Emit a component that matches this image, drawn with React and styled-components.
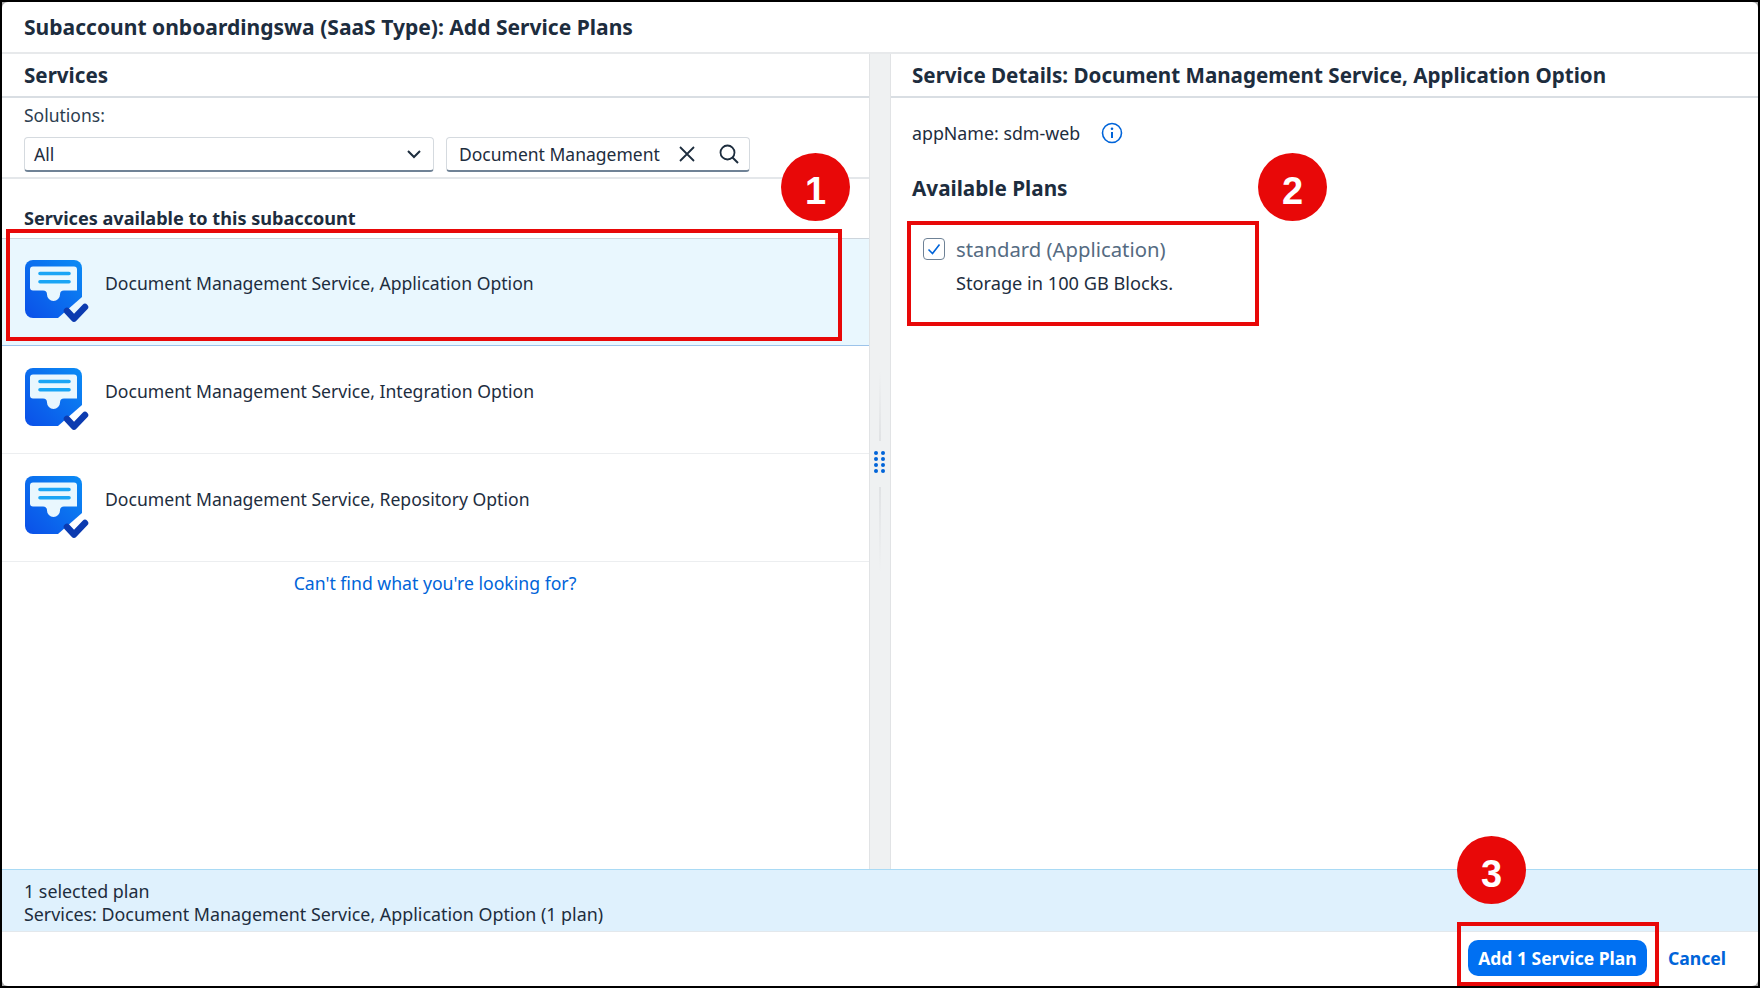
import React from "react";
import styled, { createGlobalStyle } from "styled-components";

const Global = createGlobalStyle`
  html, body { margin: 0; padding: 0; background: #fff; }
  body { font-family: "Noto Sans", "Open Sans", sans-serif; color: #1d2d3e; }
  * { box-sizing: border-box; }
`;

const Frame = styled.div`
  position: relative;
  width: 1760px;
  height: 988px;
  border: 2px solid #000;
  background: #a9a9a9;
  overflow: hidden;
`;
const Dialog = styled.div`
  width: 100%;
  height: 100%;
  display: flex;
  flex-direction: column;
  background: #fff;
  border-radius: 6px;
  overflow: hidden;
`;
const TitleBar = styled.header`
  height: 52px;
  flex: none;
  display: flex;
  align-items: center;
  padding: 0 22px 1px;
  border-bottom: 2px solid #e7e9eb;
  font-size: 21.05px;
  font-weight: 700;
  white-space: nowrap;
`;
const Main = styled.main`
  flex: 1;
  min-height: 0;
  display: flex;
`;
const LeftPane = styled.section`
  width: 867px;
  flex: none;
  display: flex;
  flex-direction: column;
`;
const RightPane = styled.section`
  flex: 1;
  display: flex;
  flex-direction: column;
`;
const PaneHeader = styled.h2`
  margin: 0;
  height: 44px;
  flex: none;
  display: flex;
  align-items: center;
  padding: 0 ${(p) => p.$pad}px 0;
  border-bottom: 2px solid #d9dee3;
  font-size: 20.6px;
  font-weight: 700;
  white-space: nowrap;
`;
const Splitter = styled.div`
  width: 22px;
  flex: none;
  background: #eff1f2;
  border-left: 1px solid #e1e3e5;
  border-right: 1px solid #e1e3e5;
  display: flex;
  flex-direction: column;
  align-items: center;
  padding-top: 317px;
`;
const GripLine = styled.div`
  width: 2px;
  height: ${(p) => p.$h}px;
  background: linear-gradient(${(p) => p.$dir}, #e0e2e4, #eff1f2);
`;
const Grip = styled.svg`
  width: 14px;
  height: 26px;
  margin: 8px 0 12px;
  flex: none;
`;
const FilterArea = styled.div`
  padding: 5px 0 0 12px;
  border-bottom: 2px solid #e4e7ea;
  height: 81px;
  flex: none;
`;
const SolutionsLabel = styled.div`
  font-size: 17.5px;
  line-height: 24px;
  padding-left: 10px;
  color: #2c3d4f;
`;
const Filters = styled.div`
  display: flex;
  gap: 12px;
  margin: 10px 0 0 10px;
`;
const Field = styled.div`
  width: ${(p) => p.$w}px;
  height: 35px;
  display: flex;
  align-items: center;
  background: #fff;
  border: 1px solid #d5dadf;
  border-bottom: 2px solid #6f8296;
  border-radius: 4px;
  font-size: 17.5px;
  padding: 0 ${(p) => p.$right}px 0 ${(p) => p.$left}px;
`;
const FieldText = styled.span`
  flex: 1;
  white-space: nowrap;
`;
const SectionTitle = styled.h3`
  margin: 0;
  height: 59px;
  flex: none;
  display: flex;
  align-items: flex-end;
  padding: 0 0 8px 22px;
  font-size: 18.1px;
  font-weight: 700;
  white-space: nowrap;
`;
const ServiceRow = styled.div`
  height: 108px;
  flex: none;
  display: flex;
  align-items: flex-start;
  padding: ${(p) => (p.$selected ? 21 : 22)}px 0 0 23px;
  gap: 15px;
  background: ${(p) => (p.$selected ? "#e9f7fe" : "#fff")};
  border-top: ${(p) => (p.$selected ? "1px solid #cdd5dc" : "none")};
  border-bottom: 1px solid ${(p) => (p.$selected ? "#9cc3ea" : "#eceef0")};
`;
const ServiceIcon = styled.svg`
  width: 65px;
  height: 65px;
  flex: none;
`;
const ServiceName = styled.span`
  font-size: 17.6px;
  line-height: 24px;
  padding-top: 11px;
  white-space: nowrap;
`;
const LinkLine = styled.a`
  display: block;
  text-align: center;
  font-size: 17.65px;
  line-height: 24px;
  margin-top: 9px;
  padding-right: 1px;
  color: #0064d9;
`;
const DetailBody = styled.div`
  padding: 23px 21px 0;
`;
const AppName = styled.div`
  display: flex;
  align-items: center;
  gap: 21px;
  font-size: 17.8px;
  line-height: 24px;
`;
const PlansTitle = styled.h3`
  margin: 29px 0 0;
  font-size: 20.7px;
  line-height: 28px;
  font-weight: 700;
`;
const PlanLine = styled.div`
  display: flex;
  align-items: center;
  gap: 11px;
  margin: 33px 0 0 11px;
  font-size: 20.3px;
  line-height: 28px;
  color: #556b82;
`;
const Checkbox = styled.span`
  width: 22px;
  height: 22px;
  display: flex;
  align-items: center;
  justify-content: center;
  background: #fff;
  border: 1px solid #6f8296;
  border-radius: 4px;
`;
const PlanDesc = styled.div`
  margin: 8px 0 0 44px;
  font-size: 18.2px;
  line-height: 24px;
`;
const InfoBand = styled.div`
  height: 63px;
  flex: none;
  background: #dff1fd;
  border-top: 1px solid #a9daf5;
  border-bottom: 1px solid #e3e8ec;
  padding: 10px 22px 0;
  font-size: 17.85px;
  line-height: 22.5px;
`;
const Footer = styled.footer`
  height: 54px;
  flex: none;
  display: flex;
  align-items: center;
  justify-content: flex-end;
  gap: 21px;
  padding: 0 32px 3px 0;
`;
const PrimaryButton = styled.button`
  width: 179px;
  height: 36px;
  border: none;
  border-radius: 10px;
  background: #0070f2;
  color: #fff;
  font: 700 17.5px "Noto Sans", sans-serif;
  padding: 0;
`;
const TextButton = styled.span`
  color: #0064d9;
  font-size: 17.6px;
  font-weight: 700;
`;
const Highlight = styled.div`
  position: absolute;
  left: ${(p) => p.$x}px;
  top: ${(p) => p.$y}px;
  width: ${(p) => p.$w}px;
  height: ${(p) => p.$h}px;
  border: 4px solid #e80808;
`;
const Badge = styled.div`
  position: absolute;
  left: ${(p) => p.$x}px;
  top: ${(p) => p.$y}px;
  width: 69px;
  height: 68px;
  border-radius: 50%;
  background: #e80808;
  color: #fff;
  font: 700 38px/77px "Liberation Sans", sans-serif;
  text-align: center;
`;

const DocIcon = () => (
  <ServiceIcon viewBox="0 0 65 65">
    <defs>
      <linearGradient id="docg" x1="0" y1="1" x2="1" y2="0">
        <stop offset="0" stopColor="#0b4fe8" />
        <stop offset="1" stopColor="#0b8cf5" />
      </linearGradient>
    </defs>
    <path d="M8 0H49a8 8 0 0 1 8 8V37L33 58H8a8 8 0 0 1-8-8V8a8 8 0 0 1 8-8z" fill="url(#docg)" />
    <path d="M8 6.500H49a3 3 0 0 1 3 3V30.500H39a4 4 0 0 0-4 4a6.500 6.500 0 0 1-13 0a4 4 0 0 0-4-4H8a3 3 0 0 1-3-3V9.500a3 3 0 0 1 3-3z" fill="#e9f7fe" />
    <path d="M15 13.500H44M15 21.800H44" stroke="#1aa5f5" strokeWidth="3.600" strokeLinecap="round" />
    <path d="M42 51L49 58.500L60 47" fill="none" stroke="#0c3bb0" strokeWidth="6.500" strokeLinecap="round" strokeLinejoin="round" />
  </ServiceIcon>
);

const services = [
  { name: "Document Management Service, Application Option", selected: true },
  { name: "Document Management Service, Integration Option" },
  { name: "Document Management Service, Repository Option" },
];

export default function App() {
  return (
    <Frame>
      <Global />
      <Dialog>
        <TitleBar>Subaccount onboardingswa (SaaS Type): Add Service Plans</TitleBar>
        <Main>
          <LeftPane>
            <PaneHeader $pad={22}>Services</PaneHeader>
            <FilterArea>
              <SolutionsLabel>Solutions:</SolutionsLabel>
              <Filters>
                <Field $w={410} $left={9} $right={11}>
                  <FieldText>All</FieldText>
                  <svg width="16" height="16" viewBox="0 0 16 16">
                    <path d="M2 5L8 11L14 5" fill="none" stroke="#1d2d3e" strokeWidth="2" />
                  </svg>
                </Field>
                <Field $w={304} $left={12} $right={9}>
                  <FieldText>Document Management</FieldText>
                  <svg width="18" height="18" viewBox="0 0 18 18">
                    <path d="M2 2L16 16M16 2L2 16" stroke="#1d2d3e" strokeWidth="1.800" />
                  </svg>
                  <svg width="22" height="22" viewBox="0 0 22 22" style={{ marginLeft: 22 }}>
                    <circle cx="9.500" cy="9.500" r="7" fill="none" stroke="#1d2d3e" strokeWidth="1.800" />
                    <path d="M14.500 14.500L20 20" stroke="#1d2d3e" strokeWidth="2" />
                  </svg>
                </Field>
              </Filters>
            </FilterArea>
            <SectionTitle>Services available to this subaccount</SectionTitle>
            {services.map((s) => (
              <ServiceRow key={s.name} $selected={s.selected}>
                <DocIcon />
                <ServiceName>{s.name}</ServiceName>
              </ServiceRow>
            ))}
            <LinkLine>Can't find what you're looking for?</LinkLine>
          </LeftPane>
          <Splitter>
            <GripLine $h={70} $dir="to top" />
            <Grip viewBox="0 0 14 26">
              {[2, 8, 14, 20].map((y) =>
                [3, 10].map((x) => <circle key={`${x}-${y}`} cx={x} cy={y + 2} r="2" fill="#0064d9" />)
              )}
            </Grip>
            <GripLine $h={85} $dir="to bottom" />
          </Splitter>
          <RightPane>
            <PaneHeader $pad={21}>Service Details: Document Management Service, Application Option</PaneHeader>
            <DetailBody>
              <AppName>
                appName: sdm-web
                <svg width="22" height="22" viewBox="0 0 22 22">
                  <circle cx="11" cy="11" r="9.500" fill="none" stroke="#0064d9" strokeWidth="1.600" />
                  <circle cx="11" cy="6.800" r="1.300" fill="#0064d9" />
                  <path d="M11 10V16" stroke="#0064d9" strokeWidth="2" />
                </svg>
              </AppName>
              <PlansTitle>Available Plans</PlansTitle>
              <PlanLine>
                <Checkbox>
                  <svg width="14" height="14" viewBox="0 0 14 14">
                    <path d="M1.500 7.500L5.500 11.500L12.500 2.500" fill="none" stroke="#0064d9" strokeWidth="1.600" />
                  </svg>
                </Checkbox>
                standard (Application)
              </PlanLine>
              <PlanDesc>Storage in 100 GB Blocks.</PlanDesc>
            </DetailBody>
          </RightPane>
        </Main>
        <InfoBand>
          <div>1 selected plan</div>
          <div>Services: Document Management Service, Application Option (1 plan)</div>
        </InfoBand>
        <Footer>
          <PrimaryButton>Add 1 Service Plan</PrimaryButton>
          <TextButton>Cancel</TextButton>
        </Footer>
      </Dialog>
      <Highlight $x={4} $y={227} $w={836} $h={112} />
      <Highlight $x={905} $y={219} $w={352} $h={105} />
      <Highlight $x={1455} $y={920} $w={202} $h={64} />
      <Badge $x={779} $y={151}>1</Badge>
      <Badge $x={1256} $y={151}>2</Badge>
      <Badge $x={1455} $y={834}>3</Badge>
    </Frame>
  );
}
